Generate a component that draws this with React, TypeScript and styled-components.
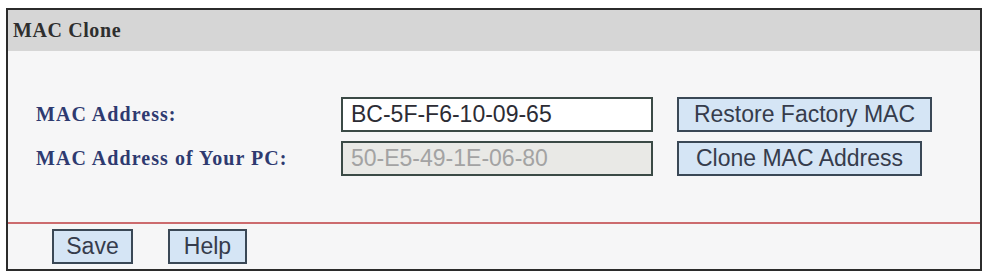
import React from "react";
import styled, { createGlobalStyle } from "styled-components";

const GlobalStyle = createGlobalStyle`
  html, body {
    margin: 0;
    padding: 0;
    background: #ffffff;
  }
`;

const Panel = styled.div`
  box-sizing: border-box;
  width: 976px;
  height: 263px;
  margin: 8px 0 0 6px;
  border: 2px solid #2b2b2b;
  background: #f6f6f7;
  display: flex;
  flex-direction: column;
`;

const Header = styled.div`
  height: 41px;
  background: #d6d6d6;
  display: flex;
  align-items: center;
  padding-left: 5px;
  font-family: "Liberation Serif", serif;
  font-size: 20px;
  font-weight: bold;
  letter-spacing: 0.6px;
  color: #2e2e2e;
`;

const Body = styled.div`
  flex: 1;
  padding: 46px 0 0 28px;
  display: grid;
  grid-template-columns: 305px 336px auto;
  grid-auto-rows: 35px;
  row-gap: 9px;
  align-content: start;
  align-items: center;
`;

const Label = styled.div`
  font-family: "Liberation Serif", serif;
  font-size: 20px;
  font-weight: bold;
  letter-spacing: 1.05px;
  color: #2e3a70;
`;

const Field = styled.input<{ $disabled?: boolean }>`
  box-sizing: border-box;
  width: 312px;
  height: 35px;
  border: 2px solid #3b4a46;
  background: ${(p) => (p.$disabled ? "#e9e9e6" : "#ffffff")};
  color: ${(p) => (p.$disabled ? "#a3a3a3" : "#2c2c34")};
  font-family: "Liberation Sans", Arial, sans-serif;
  font-size: 23px;
  padding: 0 0 0 8px;
  outline: none;
`;

const Button = styled.button<{ $w: number }>`
  box-sizing: border-box;
  width: ${(p) => p.$w}px;
  height: 35px;
  border: 2px solid #3a4856;
  background: #d5e5f5;
  color: #363c4c;
  font-family: "Liberation Sans", Arial, sans-serif;
  font-size: 23px;
  padding: 0;
  text-align: center;
  cursor: pointer;
`;

const Divider = styled.div`
  height: 2px;
  background: #cc6b6e;
`;

const Footer = styled.div`
  display: flex;
  gap: 35px;
  padding: 5px 0 5px 44px;
`;

export default function App() {
  return (
    <>
      <GlobalStyle />
      <Panel>
        <Header>MAC Clone</Header>
        <Body>
          <Label>MAC Address:</Label>
          <Field defaultValue="BC-5F-F6-10-09-65" />
          <Button $w={255}>Restore Factory MAC</Button>
          <Label>MAC Address of Your PC:</Label>
          <Field $disabled disabled defaultValue="50-E5-49-1E-06-80" />
          <Button $w={245}>Clone MAC Address</Button>
        </Body>
        <Divider />
        <Footer>
          <Button $w={81}>Save</Button>
          <Button $w={79}>Help</Button>
        </Footer>
      </Panel>
    </>
  );
}
